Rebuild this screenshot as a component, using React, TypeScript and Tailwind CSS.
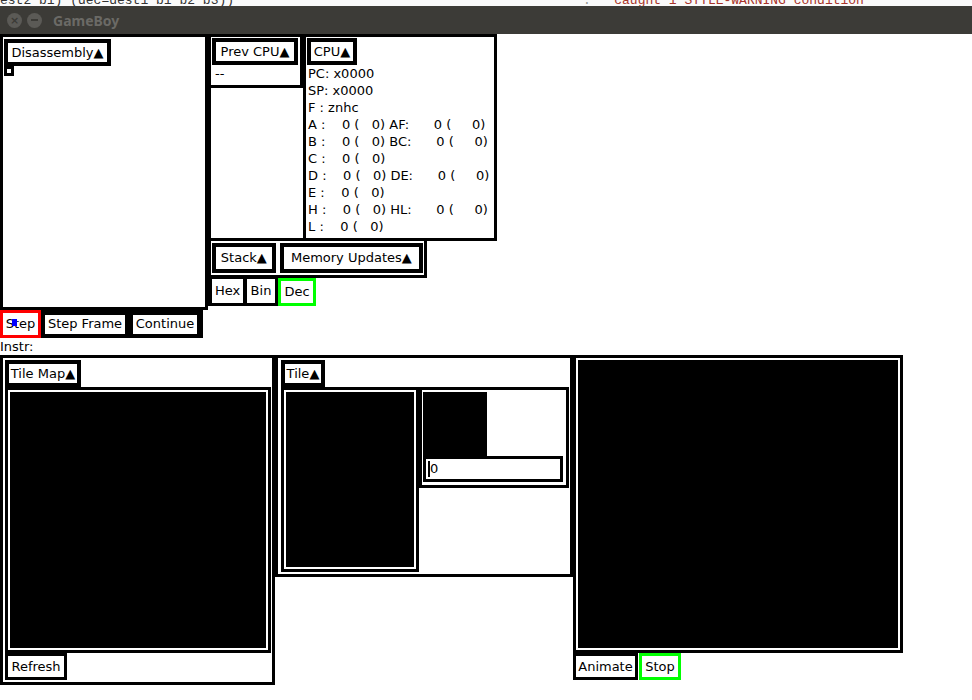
const cpuLines = [
  "PC: x0000",
  "SP: x0000",
  "F : znhc",
  "A :    0 (   0) AF:      0 (     0)",
  "B :    0 (   0) BC:      0 (     0)",
  "C :    0 (   0)",
  "D :    0 (   0) DE:      0 (     0)",
  "E :    0 (   0)",
  "H :    0 (   0) HL:      0 (     0)",
  "L :    0 (   0)",
];

const Label = ({ text, w }: { text: string; w: string }) => (
  <div className={`${w} h-[27px] border-[4px] border-black bg-white flex items-center justify-center leading-[19px] whitespace-nowrap`}>
    {text}▲
  </div>
);

const Screen = ({ w, h }: { w: string; h: string }) => (
  <div className="border-[3px] border-black bg-white p-[2px] w-fit">
    <div className={`${w} ${h} bg-black`} />
  </div>
);

const App = () => {
  return (
    <div className="w-[972px] h-[700px] bg-white overflow-hidden font-['DejaVu_Sans',sans-serif] text-[13px] text-black">
      {/* editor text peeking above the window */}
      <div className="h-[6px] overflow-hidden bg-[#fafafa] flex font-['Liberation_Mono',monospace] text-[13px] leading-[13px]">
        <div className="-mt-[6px] whitespace-pre text-[#333]">est2 b1) (dec=dest1 b1 b2 b3))</div>
        <div className="-mt-[6px] ml-[349px] whitespace-pre text-[#999]">:   </div>
        <div className="-mt-[6px] whitespace-pre text-[#a8342a]">caught 1 STYLE-WARNING condition</div>
      </div>

      {/* title bar */}
      <div className="h-[28px] bg-[#3c3b37] flex items-center pl-[7px]">
        <div className="w-[15px] h-[15px] rounded-full bg-[#5b5a56] flex items-center justify-center text-[#3c3b37] text-[11px] leading-none font-bold">
          ×
        </div>
        <div className="w-[15px] h-[15px] rounded-full bg-[#5b5a56] ml-[5px] flex items-center justify-center">
          <div className="w-[7px] h-[2px] bg-[#3c3b37]" />
        </div>
        <div className="ml-[11px] font-['Noto_Sans',sans-serif] font-bold text-[14px] text-[#6b6a66]">GameBoy</div>
      </div>

      {/* top area */}
      <div className="flex items-start">
        <div className="w-[208px]">
          <div className="h-[276px] border-[3px] border-black pl-[1px] pt-[2px]">
            <Label text="Disassembly" w="w-[107px]" />
            <div className="w-[10px] h-[10px] border-[3px] border-black bg-white" />
          </div>
          <div className="w-[203px] h-[28px] bg-black flex items-center">
            <div className="relative w-[41px] h-[28px] border-[3px] border-[#ff0000] bg-white flex items-center justify-center">
              Step
              <div className="absolute left-[9px] top-[6px] w-[5px] h-[7px] bg-[#0000ff]" />
            </div>
            <div className="ml-[4px] w-[80px] h-[19px] bg-white flex items-center justify-center whitespace-nowrap">
              Step Frame
            </div>
            <div className="ml-[8px] w-[64px] h-[19px] bg-white flex items-center justify-center">Continue</div>
          </div>
        </div>

        <div className="w-[289px]">
          <div className="flex items-start">
            <div className="w-[95px]">
              <div className="h-[54px] border-[3px] border-black pl-[1px] pt-[1px]">
                <Label text="Prev CPU" w="w-[86px]" />
                <div className="pl-[3px] leading-[17px]">--</div>
              </div>
              <div className="h-[153px] border-l-[3px] border-black" />
            </div>
            <div className="w-[194px] h-[207px] border-[3px] border-black pl-[1px] pt-[1px]">
              <Label text="CPU" w="w-[50px]" />
              <div className="pl-[1px]">
                {cpuLines.map((line) => (
                  <div key={line} className="leading-[17px] whitespace-pre">
                    {line}
                  </div>
                ))}
              </div>
            </div>
          </div>
          <div className="relative -mt-[3px] w-[219px] h-[40px] border-[3px] border-black bg-white flex items-center px-[1px]">
            <div className="w-[64px] h-[30px] border-[4px] border-black bg-white flex items-center justify-center">Stack▲</div>
            <div className="ml-[4px] w-[144px] h-[30px] border-[4px] border-black bg-white flex items-center justify-center whitespace-nowrap">
              Memory Updates▲
            </div>
          </div>
          <div className="flex items-start bg-black w-fit h-[28px] pl-[4px]">
            <div className="mt-[1px] w-[31px] h-[24px] bg-white flex items-center justify-center">Hex</div>
            <div className="ml-[4px] mt-[1px] w-[28px] h-[24px] bg-white flex items-center justify-center">Bin</div>
            <div className="ml-[3px] w-[38px] h-[28px] border-[3px] border-[#00ff00] bg-white flex items-center justify-center">
              Dec
            </div>
          </div>
        </div>
      </div>

      <div className="h-[17px] leading-[17px]">Instr:</div>

      {/* bottom area */}
      <div className="flex items-start">
        <div className="w-[275px] h-[330px] border-[3px] border-black pl-[2px] pt-[2px]">
          <Label text="Tile Map" w="w-[76px]" />
          <Screen w="w-[256px]" h="h-[256px]" />
          <div className="w-[62px] h-[27px] border-[3px] border-black bg-white flex items-center justify-center">Refresh</div>
        </div>

        <div className="w-[298px] h-[222px] border-[3px] border-black pl-[3px] pt-[2px]">
          <Label text="Tile" w="w-[44px]" />
          <div className="flex items-start">
            <Screen w="w-[128px]" h="h-[175px]" />
            <div className="w-[150px] border-[3px] border-black bg-white pl-[1px] pt-[2px] pb-[3px]">
              <div className="w-[64px] h-[64px] bg-black" />
              <div className="w-[140px] h-[26px] border-[3px] border-black bg-white flex items-center pl-[2px]">
                <div className="w-[2px] h-[16px] bg-black" />
                <span className="leading-[16px]">0</span>
              </div>
            </div>
          </div>
        </div>

        <div>
          <Screen w="w-[320px]" h="h-[288px]" />
          <div className="flex items-start">
            <div className="w-[65px] h-[27px] border-[3px] border-black bg-white flex items-center justify-center">Animate</div>
            <div className="ml-[1px] w-[42px] h-[27px] border-[3px] border-[#00ff00] bg-white flex items-center justify-center">
              Stop
            </div>
          </div>
        </div>
      </div>
    </div>
  );
};

export default App;
